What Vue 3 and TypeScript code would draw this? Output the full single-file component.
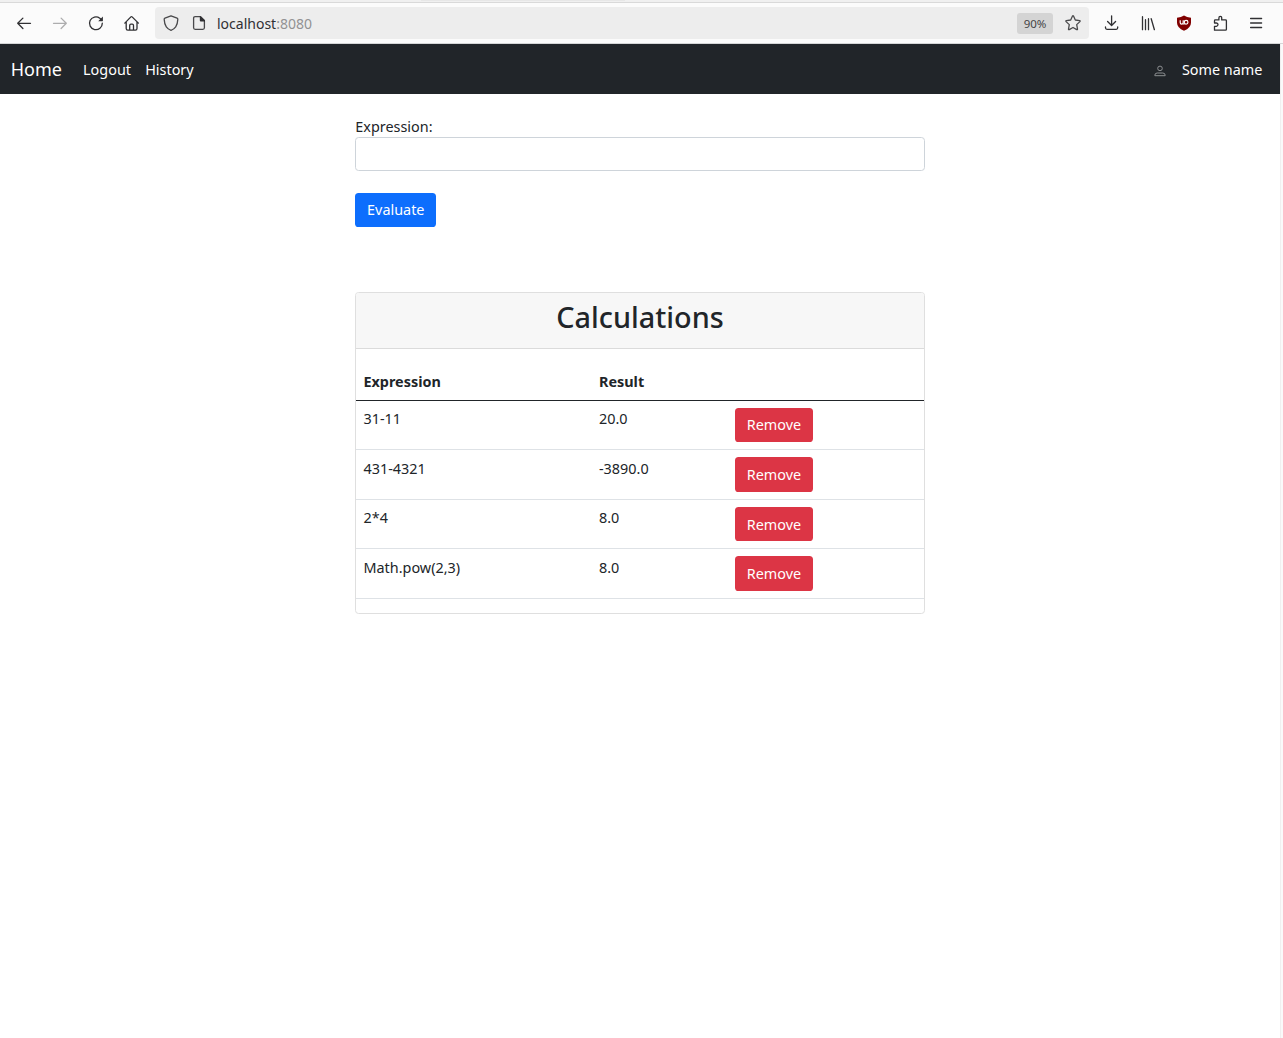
<script setup lang="ts">
interface Calculation {
  expression: string
  result: string
}

const calculations: Calculation[] = [
  { expression: '31-11', result: '20.0' },
  { expression: '431-4321', result: '-3890.0' },
  { expression: '2*4', result: '8.0' },
  { expression: 'Math.pow(2,3)', result: '8.0' },
]
</script>

<template>
  <div class="window">
    <div class="tabstrip"><div class="tab-shadow"></div></div>
    <header class="toolbar">
      <div class="group left">
        <svg class="ico" viewBox="0 0 16 16"><path d="M14.500 8.300H1.700M6.900 3.100 1.700 8.300l5.200 5.200" /></svg>
        <svg class="ico dim" viewBox="0 0 16 16"><path d="M1.500 8.300h12.800M9.100 3.100l5.200 5.200-5.200 5.200" /></svg>
        <svg class="ico" viewBox="0 0 16 16"><path d="M14.300 8.200A6.400 6.400 0 1 1 11.800 3.200L13 4.300" /><path class="solid" d="M14.900 1.500v4.300a.4.4 0 0 1-.4.400h-4.300z" /></svg>
        <svg class="ico" viewBox="0 0 16 16"><path d="M.8 8.100 6.900 1.900Q7.500 1.300 8.100 1.900L14.400 8.100M2.200 7.100v6.500q0 1.600 1.600 1.600h7.600q1.600 0 1.600-1.600V7.100M5.700 15v-4.600q0-1.200 1.200-1.200h1.400q1.200 0 1.200 1.200V15" /></svg>
      </div>
      <div class="urlbar">
        <svg class="ico soft" viewBox="0 0 16 16"><path d="M8 .8 14.100 3.200q.8.300.7 1.200-.2 4.800-2.100 7.500Q11 14.300 8 15.300 5 14.300 3.300 11.900 1.400 9.200 1.200 4.400q-.1-.9.7-1.200z" /></svg>
        <svg class="ico soft page" viewBox="0 0 16 16"><path d="M9.300 1.700H4.100q-1.500 0-1.500 1.500v9.600q0 1.500 1.500 1.500h7.800q1.500 0 1.500-1.500V5.800z" /><path class="solid" d="M8.800 1.200h1.100l4.100 4.100v1.200H9.800q-1 0-1-1z" /></svg>
        <span class="url">localhost<span>:8080</span></span>
        <span class="zoom">90%</span>
        <svg class="ico soft star" viewBox="0 0 16 16"><path d="M7.500 1.100q.5-.8 1 0L10.300 5l4.300.6q1 .2.300 1l-3.200 3 .8 4.400q.1 1-.8.600L8 12.500l-3.700 2.100q-.9.400-.8-.6l.8-4.400-3.200-3q-.7-.8.3-1L5.700 5z" /></svg>
      </div>
      <div class="group right">
        <svg class="ico" viewBox="0 0 16 16"><path d="M7.600.8v9.600M3.600 6.500l4 4 4-4M1.500 11.900v.9q0 1.500 1.500 1.500h9.200q1.500 0 1.500-1.500v-.9" /></svg>
        <svg class="ico" viewBox="0 0 16 16"><path d="M2.500 1.700v13M5.500 4.700v10M8.500 3.700v11M11.200 3.700l3.200 11" /></svg>
        <svg class="ublock" viewBox="0 0 16 16"><path class="shield" d="M8 .5Q10.800 2.500 15 2.700v5q0 5-7 8.100Q1 12.700 1 7.700v-5Q5.200 2.500 8 .5z" /><path class="mark" d="M4.200 5.300v2.200q0 1.600 1.500 1.600t1.500-1.600V5.300M7.200 9h1.500" /><circle class="mark" cx="10.100" cy="7.200" r="1.850" /></svg>
        <svg class="ico" viewBox="0 0 16 16"><path d="M2.500 15.200V11.300h1.900q1.600-.2 1.600-1.700T4.400 8H2.500V5.700q0-.8.8-.8h3.600V3Q6.900 1.300 8.300 1.300T9.700 3v1.900h3.800q.9 0 .9.800v8.600q0 .9-.9.900z" /></svg>
        <svg class="ico" viewBox="0 0 16 16"><path d="M2.600 3.500h11M2.600 8h11M2.600 12.500h11" /></svg>
      </div>
    </header>
    <div class="viewport">
      <div class="page-area">
        <nav class="navbar">
          <a class="brand">Home</a>
          <a class="link">Logout</a>
          <a class="link">History</a>
          <div class="user">
            <svg viewBox="0 0 12 12"><circle cx="6" cy="3.400" r="2.300" /><path d="M.8 10.700v-.5Q1 8 3.200 8h5.600Q11 8 11.200 10.200v.5z" /></svg>
            <span>Some name</span>
          </div>
        </nav>
        <main class="content">
          <label for="expression">Expression:</label>
          <input id="expression" type="text" />
          <button class="btn primary">Evaluate</button>
          <section class="card">
            <h2>Calculations</h2>
            <div class="list">
              <div class="row head"><span>Expression</span><span>Result</span><span></span></div>
              <div v-for="item in calculations" :key="item.expression" class="row">
                <span class="value">{{ item.expression }}</span>
                <span class="value">{{ item.result }}</span>
                <button class="btn danger">Remove</button>
              </div>
            </div>
          </section>
        </main>
      </div>
      <div class="scrollbar"></div>
    </div>
  </div>
</template>

<style>
body { margin: 0; background: #fff; overflow: hidden; }
</style>

<style scoped>
* { box-sizing: border-box; }
.window {
  width: 1283px; height: 1038px; display: flex; flex-direction: column;
  font: 14.4px/21.6px "Noto Sans", sans-serif; color: #212529; background: #fff;
}
.tabstrip { height: 3px; flex: none; background: #f0f0f0; border-bottom: 1px solid #d9d9d9; }
.tab-shadow { width: 204px; height: 1px; margin-left: 421px; background: #e7e7e7; }
.toolbar { height: 41px; flex: none; display: flex; align-items: center; background: #fbfbfb; border-bottom: 1px solid #d5d6d7; }
.group { display: flex; align-items: center; }
.left { width: 155px; padding-left: 16px; gap: 20px; }
.right { padding-left: 15px; gap: 20px; }
.ico { width: 16px; height: 16px; flex: none; fill: none; stroke: #303033; stroke-width: 1.3; stroke-linecap: round; stroke-linejoin: round; }
.ico.dim { stroke: #adadae; }
.ico.soft { stroke: #49494b; }
.ico .solid { fill: #303033; stroke: none; }
.urlbar { width: 934px; height: 32px; display: flex; align-items: center; padding: 0 8px; background: #ededed; border-radius: 4px; }
.page { margin-left: 12px; }
.url { margin-left: 10px; padding-top: 2px; font-size: 14px; color: #303033; flex: 1; }
.url > span { color: #929293; }
.zoom { width: 36px; height: 21px; border-radius: 3px; background: #d4d4d4; color: #444446; text-align: center; font-size: 11.5px; line-height: 21px; }
.star { margin-left: 12px; }
.ublock { width: 16px; height: 16px; }
.shield { fill: #800000; }
.mark { fill: none; stroke: #fff; stroke-width: 1.2; }
.viewport { flex: 1; display: flex; }
.page-area { width: 1280px; }
.scrollbar { width: 3px; background: #fafafa; border-left: 1px solid #f0f0f0; }
.navbar { height: 50px; display: flex; align-items: center; padding: 2px 17.6px 0 10.700px; background: #212529; color: #fff; }
.brand { width: 72.400px; font-size: 18px; }
.link { margin-right: 14.2px; }
.user { margin-left: auto; display: flex; align-items: center; gap: 15.600px; }
.user svg { width: 12px; height: 12px; margin-top: 2px; fill: none; stroke: #8c8f91; stroke-width: 1; }
.content { width: 570px; margin: 22px auto 0; display: flex; flex-direction: column; align-items: flex-start; }
label { height: 21px; padding-left: .3px; }
input { width: 100%; height: 34px; border: 1px solid #ced4da; border-radius: 3.6px; background: #fff; outline: none; padding: 0 11px; font: inherit; }
.btn { height: 34px; border: 0; border-radius: 3.6px; padding: 0 0 0 .6px; color: #fff; font: inherit; text-align: center; }
.primary { width: 81px; margin-top: 22px; background: #0d6efd; }
.card { width: 100%; height: 322px; margin-top: 65px; border: 1px solid #dfdfdf; border-radius: 3.6px; overflow: hidden; }
h2 { height: 56px; margin: 0; padding-top: 6px; background: #f7f7f7; border-bottom: 1px solid #dbdbdb; font-size: 28.8px; line-height: 35px; font-weight: 500; text-align: center; }
.list { padding-top: 14.400px; }
.row { height: 49.5px; display: grid; grid-template-columns: 235.500px 136px 1fr; align-items: start; padding: 7.200px 7.200px 0; border-bottom: 1px solid #dee2e6; }
.row span { padding-left: .3px; }
.row .value { padding-top: .25px; }
.head { height: 37.400px; font-weight: 700; border-bottom-color: #212529; }
.danger { width: 78px; height: 34.400px; background: #dc3545; }
.row:nth-child(4) .danger { padding-top: 1px; }
</style>
